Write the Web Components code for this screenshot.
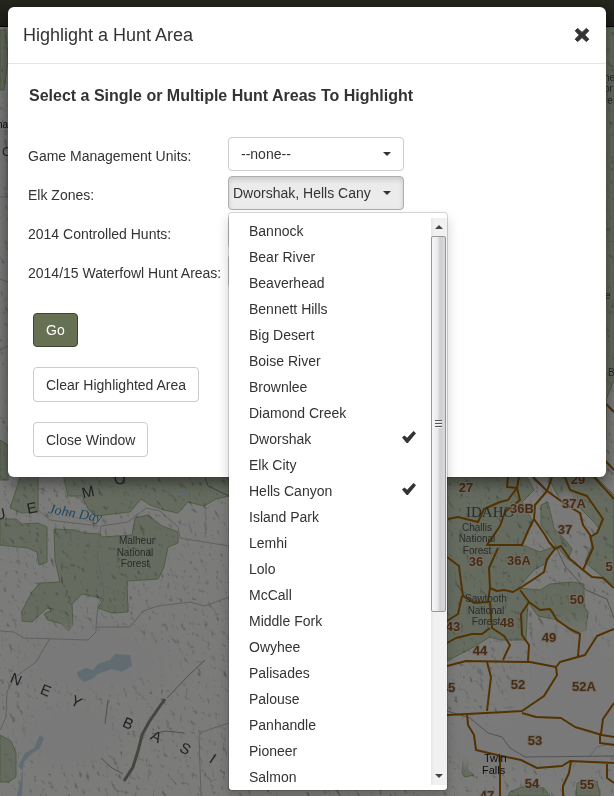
<!DOCTYPE html>
<html lang="en">
<head>
<meta charset="utf-8">
<title>Highlight a Hunt Area</title>
<style>
  html, body { height: 100%; margin: 0; }
  body { font: 14px/20px "Liberation Sans", Arial, sans-serif; color: #333; overflow: hidden; }
</style>
</head>
<body>
<hunt-app></hunt-app>

<template id="tpl-map">
  <style>
    :host { display: block; background: #efeeec; }
    svg { display: block; width: 100%; height: 100%; }
    .forest path { fill: #cbd8be; stroke: #9fb888; stroke-width: 1; }
    .zones { fill: none; stroke: #a66400; stroke-width: 2; stroke-linejoin: round; }
    .road { fill: none; stroke: #c3c1c1; stroke-width: 1; }
    .water path { fill: #c0d9e4; }
    .river { fill: none; stroke: #b5cedb; stroke-width: 1; }
    text { font-family: "Liberation Sans", Arial, sans-serif; }
    .num { font-size: 13px; font-weight: bold; fill: #8f5626; stroke: #e6dccf; stroke-width: 2px; paint-order: stroke; text-anchor: middle; }
    .place { font-size: 10px; fill: #555; text-anchor: middle; }
    .edge { font-size: 10px; fill: #555; }
    .range { font-size: 15px; fill: #444; text-anchor: middle; }
  </style>
  <svg viewBox="0 0 614 796" preserveAspectRatio="xMinYMin slice" role="img" aria-label="Hunt area map">
    <defs>
      <filter id="relief" x="0" y="0" width="100%" height="100%" color-interpolation-filters="sRGB">
        <feTurbulence type="fractalNoise" baseFrequency="0.16 0.12" numOctaves="4" seed="8" result="n"/>
        <feDiffuseLighting in="n" surfaceScale="3" lighting-color="#ffffff" diffuseConstant="1.65">
          <feDistantLight azimuth="315" elevation="55"/>
        </feDiffuseLighting>
      </filter>
      <radialGradient id="plain"><stop offset="0" stop-color="#f4f3f2"/><stop offset=".6" stop-color="#f4f3f2" stop-opacity=".9"/><stop offset="1" stop-color="#f4f3f2" stop-opacity="0"/></radialGradient>
    </defs>
    <rect width="614" height="796" fill="#f7f6f5"/>
    <g class="forest">
      <path d="M0 30H6L8 60L4 90H0Z" stroke="none"/>
      <path d="M0 440L8 445V480H0Z" stroke="none"/>
      <path d="M604 27H614V380L606 400V440H604Z" stroke="none"/>
      <path d="M22 470L16 490L10 508L22 513L38 512V470Z"/>
      <path d="M62 470L68 496L82 496L88 509L96 516L130 512L141 499L150 505L164 510L178 513L188 502L204 506L216 499L229 496V470Z"/>
      <path d="M0 519L16 519L22 524L38 523L47 527L47 562L39 565L37 552L28 548L0 545Z"/>
      <path d="M54 529L75 530L84 533L100 534L102 537L132 535L135 518L148 515L162 526L178 532V543L168 547L164 567L158 579L127 581L128 612L112 613L98 608L104 599L96 597L82 594L72 604L73 625L68 631L62 624L48 620L44 614L54 609L47 608L32 622L22 621V611L32 592L40 583L60 582L55 560Z"/>
      <path d="M0 735L11 741L16 753V777L9 782H0Z"/>
      <path d="M447 477H527L534 490L522 502L532 520L528 531L522 545L540 552L556 546L546 563L534 570L518 588L540 590L550 584L572 582L584 584V606L588 612L586 630L574 634L558 620L538 616L528 602L526 640L500 640L490 637L470 649L447 661Z"/>
      <path d="M541 505L548 502L554 528L566 541L572 549L568 559L556 546L541 525Z"/>
      <path d="M548 477H596L614 495V585L603 577L594 570L585 562L592 545L590 537L600 530L594 522L580 508L560 500Z"/>
      <path d="M463 760L467 757L469 762L467 770L474 775L465 777L462 773Z"/>
      <path d="M510 792L522 787L544 788L550 796H508Z"/>
      <path d="M577 783L597 781L600 796H576Z"/>
    </g>
    <rect width="614" height="796" filter="url(#relief)" style="mix-blend-mode:multiply" opacity=".36"/>
    <g fill="url(#plain)">
      <ellipse cx="95" cy="660" rx="90" ry="42"/>
      <ellipse cx="575" cy="700" rx="75" ry="90"/>
      <ellipse cx="500" cy="745" rx="80" ry="32"/>
      <ellipse cx="70" cy="735" rx="60" ry="40"/>
      <ellipse cx="566" cy="510" rx="14" ry="22"/>
    </g>
    <g class="road">
      <path d="M0 631L14 632L24 638L88 640L96 632V627L130 627L143 611L158 606L190 602L205 606L229 597"/>
      <path d="M96 627L98 605L104 594L97 552L101 526L128 522L146 508L160 511L178 527L180 538L229 546"/>
      <path d="M50 638L36 662L14 678L7 692L6 717L0 730"/>
      <path d="M201 796L199 736L202 732L229 723"/>
      <path d="M205 477L208 486L229 496" stroke="#888"/>
      <path d="M38 477L38 510L50 520L98 526M0 197H8M0 350L8 346M0 279L8 282M606 229L614 227"/>
      <path d="M555 545L565 566L586 590L607 599L614 618M447 711L470 718L488 733L502 737L510 748L525 757L614 756" stroke="#a5a5aa"/>
    </g>
    <path class="river" d="M0 480L8 476M7 160V190M590 756L597 747L614 743"/>
    <g class="water">
      <path d="M77 672L86 668L93 670L98 664L110 660L115 654L130 655L132 666L122 672L112 669L98 674L92 679L84 682L78 677Z"/>
      <path d="M18 766L25 753L34 748L40 735L44 738L40 748L30 755L24 762L20 783L17 796H22L23 771Z"/>
      <path d="M164 622L168 628L167 632Z"/><path d="M480 668L484 676L478 673Z"/><path d="M178 492L186 491L188 494L180 495Z"/>
    </g>
    <g fill="none" stroke="#a19d91">
      <path d="M165 699L160 706L149 722L142 735L138 751L133 767L124 781" stroke="#8d897c" stroke-width="3"/>
      <path d="M167 698L188 676L205 660M152 734L166 731L184 733M108 700L105 724M101 758L112 768L123 774"/>
    </g>
    <g class="zones">
      <path d="M508 477L507 487L517 488M519 477L517 488L508 500L500 502L484 509L478 522L458 517L448 519M533 477L547 491L552 477M547 491L535 505L534 519L528 531L522 545L487 545L500 526L505 512L520 500L517 488"/>
      <path d="M534 519L545 535L549 542L555 549L547 559L544 572L534 579L520 588L513 592L504 590L497 591L490 588L489 568L498 548"/>
      <path d="M547 491L561 501L570 507L580 513L583 525L590 535L593 548L583 570L570 559L561 546L555 549"/>
      <path d="M565 477L570 490L587 496L594 506L603 519L597 533L590 537M583 570L592 577L603 578L614 588M594 477L614 499M605 403L614 412M600 455L614 470"/>
      <path d="M447 557L459 566L461 582L463 596L474 603L488 602L490 588M490 602L492 628L504 636L510 645L503 660"/>
      <path d="M462 596L458 614L447 621M447 643L456 638L472 634L482 634L490 628M520 590L529 602L521 614L522 635L529 645L528 661"/>
      <path d="M529 602L540 610L550 609L557 620L570 629L580 634L578 656"/>
      <path d="M447 666L466 661L530 662L556 667L560 662L585 655L597 636L614 629"/>
      <path d="M487 662L491 677L487 711M556 667L557 675L544 696L522 711L467 714L447 715M522 713L536 717L561 718L575 727L602 735L614 737M601 734L603 719L614 703M600 735V743L614 745"/>
      <path d="M467 714L468 725L474 735L476 750L497 755L521 760L537 768L562 766L570 761L614 763M500 756V796M571 761L569 773L563 786V796M607 763V778L614 783"/>
    </g>
    <g class="place">
      <text x="137" y="544">Malheur</text><text x="135" y="556">National</text><text x="135" y="567">Forest</text>
      <text x="477" y="531">Challis</text><text x="477" y="542">National</text><text x="477" y="554">Forest</text>
      <text x="486" y="602">Sawtooth</text><text x="486" y="614">National</text><text x="486" y="625">Forest</text>
    </g>
    <g class="edge">
      <text x="-3" y="128" fill="#111">na</text><text x="2" y="156" font-size="13">C</text>
      <text x="604" y="81">ne</text><text x="604" y="92">or</text><text x="604" y="104">re</text>
      <text x="605" y="299">e</text><text x="608" y="376">B</text>
    </g>
    <g font-size="11" fill="#222"><text x="484" y="762">Twin</text><text x="482" y="774">Falls</text></g>
    <text x="466" y="517" style="font:15px 'Liberation Serif',serif" fill="#555">IDAHO</text>
    <text transform="translate(48 513) rotate(10)" style="font:italic 14px 'Liberation Serif',serif" fill="#4590b4">John Day</text>
    <g class="range">
      <text transform="translate(1 519) rotate(-12)">U</text><text transform="translate(33 513) rotate(-12)">E</text>
      <text transform="translate(89 497) rotate(-12)">M</text><text transform="translate(121 484) rotate(-12)">O</text>
      <text transform="translate(14 684) rotate(24)">N</text><text transform="translate(44 695) rotate(22)">E</text>
      <text transform="translate(74 706) rotate(28)">Y</text><text transform="translate(126 728) rotate(24)">B</text>
      <text transform="translate(154 741) rotate(28)">A</text><text transform="translate(183 753) rotate(28)">S</text>
      <text transform="translate(210 763) rotate(34)">I</text>
    </g>
    <g class="num">
      <text x="466" y="492">27</text><text x="578" y="484">29</text><text x="522" y="513">36B</text><text x="574" y="508">37A</text>
      <text x="565" y="534">37</text><text x="476" y="566">36</text><text x="519" y="565">36A</text><text x="577" y="604">50</text>
      <text x="453" y="631">43</text><text x="507" y="627">48</text><text x="549" y="642">49</text><text x="480" y="655">44</text>
      <text x="448" y="692">45</text><text x="518" y="689">52</text><text x="584" y="691">52A</text><text x="535" y="745">53</text>
      <text x="532" y="788">54</text><text x="587" y="789">55</text><text x="609" y="571">5</text><text x="487" y="800">47</text>
    </g>
  </svg>
</template>

<template id="tpl-select">
  <style>
    :host { display: block; position: relative; }
    .box { display: block; position: relative; }
    select { box-sizing: border-box; display: block; width: 100%; height: 34px; margin: 0; padding: 0 32px 0 12px; appearance: none;
      font: inherit; color: #333; background: #fff; border: 1px solid #ccc; border-radius: 4px; }
    .box::after { content: ""; position: absolute; right: 13px; top: 15px; border: 4px solid transparent; border-top-color: #333; border-bottom: 0; pointer-events: none; }
  </style>
  <span class="box"><select><option></option></select></span>
</template>

<template id="tpl-multi">
  <style>
    :host { display: block; position: relative; }
    button { box-sizing: border-box; display: flex; align-items: center; justify-content: space-between; width: 100%; height: 34px; margin: 0;
      padding: 0 12px 0 4px; font: inherit; color: #333; background: #ebebeb; border: 1px solid #adadad; border-radius: 4px;
      box-shadow: inset 0 3px 5px rgba(0,0,0,.125); }
    .value { overflow: hidden; white-space: nowrap; }
    .caret { border: 4px solid transparent; border-top-color: #333; border-bottom: 0; }
    .menu { position: absolute; z-index: 2; top: 36px; left: 0; box-sizing: border-box; display: grid; grid-template-columns: 1fr 16px;
      width: 220px; height: 579px; padding: 5px 0; background: #fff; background-clip: padding-box; border: 1px solid rgba(0,0,0,.15); border-radius: 4px;
      box-shadow: 0 6px 12px rgba(0,0,0,.175); }
    .list { overflow: hidden; min-height: 0; }
    .menu[hidden] { display: none; }
  </style>
  <button type="button" aria-haspopup="true" aria-expanded="true"><span class="value"></span><span class="caret"></span></button>
  <div class="menu"><div class="list" role="group"><slot></slot></div><scroll-rail></scroll-rail></div>
</template>

<template id="tpl-option">
  <style>
    :host { display: block; }
    label { display: flex; align-items: center; justify-content: space-between; height: 26px; padding: 0 15px 0 20px; }
    input { appearance: none; width: 14px; height: 12px; margin: 0 0 4px; }
    input:checked { background: #333; clip-path: polygon(0 55%, 17% 38%, 37% 57%, 82% 0, 100% 18%, 42% 100%, 33% 100%); }
  </style>
  <label><slot></slot><input type="checkbox"></label>
</template>

<template id="tpl-rail">
  <style>
    :host { display: grid; grid-template-rows: 18px 376px 1fr 18px; min-height: 0; background: linear-gradient(90deg, #e6e6e6, #f1f1f1 20%, #f1f1f1); }
    .arrow { display: grid; place-items: center; }
    .arrow::before { content: ""; border: 4px solid transparent; }
    .up::before { border-bottom-color: #444; border-top: 0; }
    .down { grid-row: 4; }
    .down::before { border-top-color: #444; border-bottom: 0; }
    .thumb { display: grid; place-content: center; gap: 1px; border: 1px solid #979797; border-radius: 2px; margin-right: 1px;
      background: linear-gradient(90deg, #f6f6f6, #e9e9eb 45%, #cfcfd3 60%, #d8d8da); }
    .thumb i { width: 7px; height: 2px; background: linear-gradient(#555 50%, #f6f6f6 50%); }
  </style>
  <span class="arrow up"></span><span class="thumb"><i></i><i></i><i></i></span><span class="arrow down"></span>
</template>

<template id="tpl-button">
  <style>
    :host { display: block; }
    button { box-sizing: border-box; height: 35px; margin: 0; padding: 0 12px; font: inherit; color: #333; background: #fff; border: 1px solid #ccc; border-radius: 4px; }
    :host([primary]) button { height: 34px; color: #fff; background: #667052; border-color: #3f4533; }
  </style>
  <button type="button"><slot></slot></button>
</template>

<template id="tpl-dialog">
  <style>
    :host { display: block; background: #fff; border-radius: 6px; box-shadow: 0 5px 15px rgba(0,0,0,.5); }
    header { display: flex; align-items: center; justify-content: space-between; height: 56px; padding: 0 16px 0 15px; border-bottom: 1px solid #e5e5e5; }
    h4 { margin: 0; font-size: 18px; font-weight: normal; line-height: 20px; }
    header button { display: block; margin: 0; padding: 0; border: 0; background: none; color: #333; }
    svg { display: block; }
    .body { padding: 20px; }
  </style>
  <header><h4><slot name="title"></slot></h4>
    <button type="button" aria-label="Close"><svg width="16" height="16" viewBox="0 0 16 16"><path d="M3.6 1.4L8 5.4L12.4 1.4L14.8 3.8L10.7 8L14.8 12.2L12.4 14.6L8 10.6L3.6 14.6L1.2 12.2L5.3 8L1.2 3.8Z" fill="#333" stroke="#333" stroke-linejoin="round"/></svg></button>
  </header>
  <div class="body"><slot></slot></div>
</template>

<template id="tpl-app">
  <style>
    :host { display: grid; grid-template: 100% / 100%; height: 100%; overflow: hidden; }
    hunt-map, .shade, .stage { grid-area: 1 / 1; min-height: 0; }
    .shade { background: linear-gradient(#4a4e3c, #393c2f 26px, #000 26px, #000 27px, transparent 27px); position: relative; }
    .shade::after { content: ""; display: block; height: 100%; background: rgba(0,0,0,.5); }
    .stage { position: relative; padding: 7px 8px; }
    h5 { margin: 2px 0 31px 1px; font-size: 16px; line-height: 20px; }
    .fields { display: grid; grid-template-columns: 200px 176px; grid-auto-rows: 34px; row-gap: 5px; align-items: center; }
    .label { padding-top: 4px; white-space: nowrap; }
    .actions { display: grid; gap: 20px; padding: 25px 5px 0; justify-items: start; }
  </style>
  <hunt-map></hunt-map>
  <div class="shade"></div>
  <div class="stage">
    <hunt-dialog role="dialog" aria-label="Highlight a Hunt Area">
      <span slot="title">Highlight a Hunt Area</span>
      <h5>Select a Single or Multiple Hunt Areas To Highlight</h5>
      <div class="fields">
        <span class="label">Game Management Units:</span><hunt-select label="Game Management Units" value="--none--"></hunt-select>
        <span class="label">Elk Zones:</span><hunt-multiselect label="Elk Zones" value="Dworshak, Hells Cany"></hunt-multiselect>
        <span class="label">2014 Controlled Hunts:</span><hunt-select label="2014 Controlled Hunts"></hunt-select>
        <span class="label">2014/15 Waterfowl Hunt Areas:</span><hunt-select label="2014/15 Waterfowl Hunt Areas"></hunt-select>
      </div>
      <div class="actions">
        <hunt-button primary>Go</hunt-button>
        <hunt-button>Clear Highlighted Area</hunt-button>
        <hunt-button>Close Window</hunt-button>
      </div>
    </hunt-dialog>
  </div>
</template>

<script>
  class Base extends HTMLElement {
    constructor() {
      super();
      this.attachShadow({ mode: "open" }).append(document.getElementById(this.constructor.tpl).content.cloneNode(true));
    }
    $(s) { return this.shadowRoot.querySelector(s); }
  }
  customElements.define("hunt-map", class extends Base { static tpl = "tpl-map"; });
  customElements.define("scroll-rail", class extends Base { static tpl = "tpl-rail"; });
  customElements.define("hunt-button", class extends Base { static tpl = "tpl-button"; });
  customElements.define("hunt-dialog", class extends Base { static tpl = "tpl-dialog"; });
  customElements.define("hunt-option", class extends Base {
    static tpl = "tpl-option";
    connectedCallback() { this.$("input").checked = this.hasAttribute("checked"); }
  });
  customElements.define("hunt-select", class extends Base {
    static tpl = "tpl-select";
    connectedCallback() {
      this.$("select").setAttribute("aria-label", this.getAttribute("label"));
      this.$("option").textContent = this.getAttribute("value") || "";
    }
  });
  const zones = ["Bannock", "Bear River", "Beaverhead", "Bennett Hills", "Big Desert", "Boise River", "Brownlee", "Diamond Creek",
    "Dworshak", "Elk City", "Hells Canyon", "Island Park", "Lemhi", "Lolo", "McCall", "Middle Fork", "Owyhee", "Palisades",
    "Palouse", "Panhandle", "Pioneer", "Salmon"];
  const chosen = new Set(["Dworshak", "Hells Canyon"]);
  customElements.define("hunt-multiselect", class extends Base {
    static tpl = "tpl-multi";
    connectedCallback() {
      const button = this.$("button"), menu = this.$(".menu");
      this.$(".value").textContent = this.getAttribute("value");
      button.setAttribute("aria-label", this.getAttribute("label"));
      this.$(".list").setAttribute("aria-label", this.getAttribute("label"));
      this.replaceChildren(...zones.map(name => {
        const o = document.createElement("hunt-option");
        o.textContent = name;
        o.toggleAttribute("checked", chosen.has(name));
        return o;
      }));
      button.addEventListener("click", () => {
        menu.hidden = !menu.hidden;
        button.setAttribute("aria-expanded", String(!menu.hidden));
      });
    }
  });
  customElements.define("hunt-app", class extends Base { static tpl = "tpl-app"; });
</script>
</body>
</html>
